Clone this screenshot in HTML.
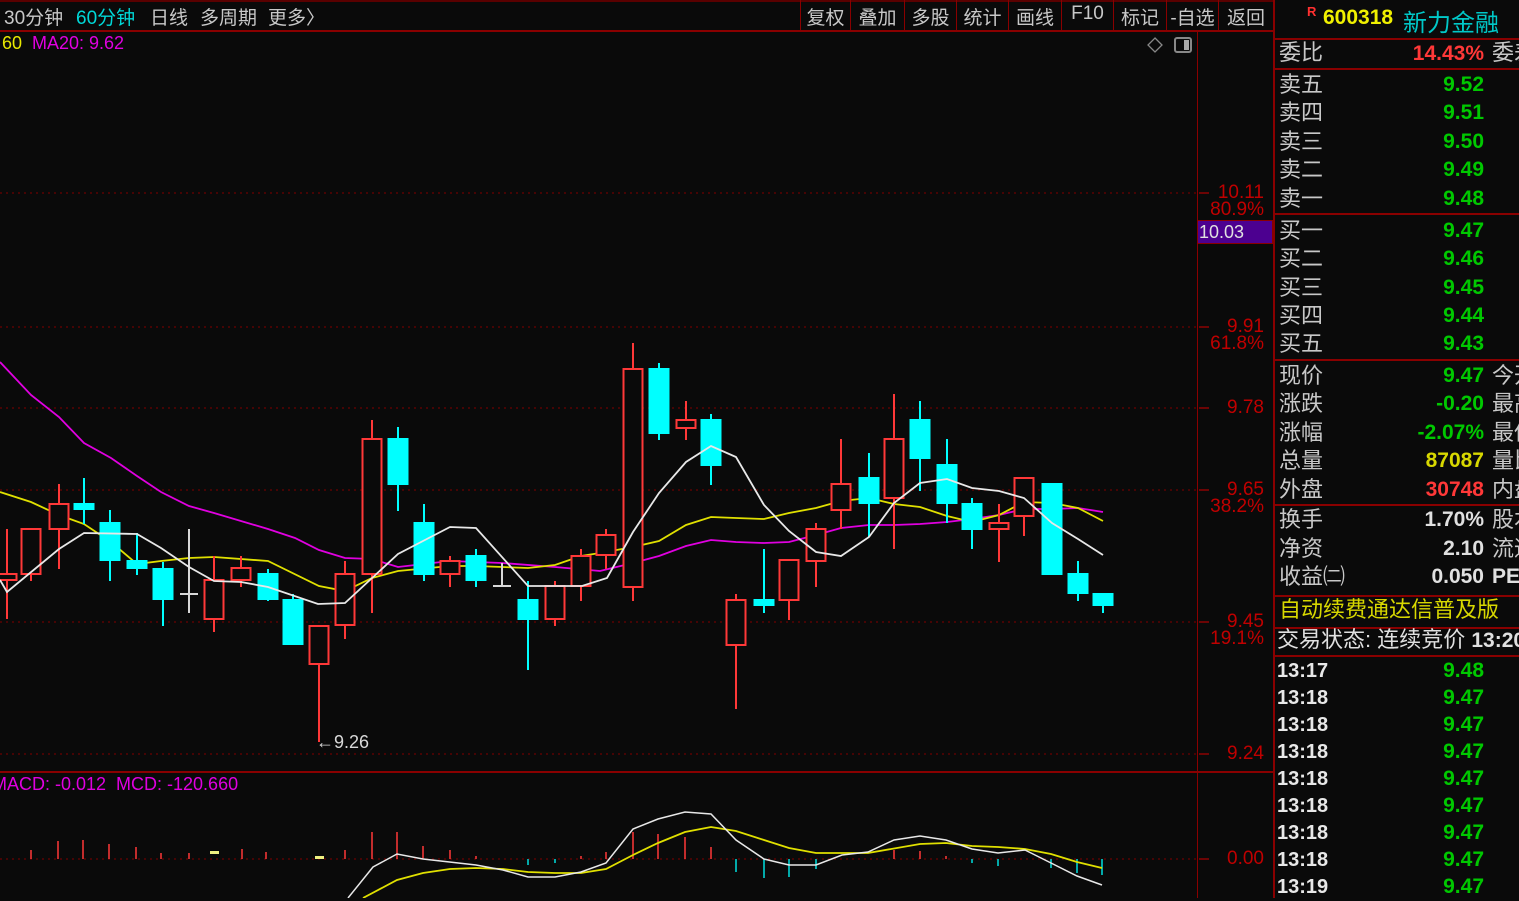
<!DOCTYPE html>
<html><head><meta charset="utf-8"><style>
*{margin:0;padding:0;box-sizing:border-box}
body{width:1519px;height:898px;background:#0a0a0a;overflow:hidden;position:relative;font-family:"Liberation Sans","Noto Sans CJK SC",sans-serif}
.a{position:absolute;white-space:nowrap}
.tb{color:#c8c8c8;font-size:19px;top:3px}
.btn{color:#c8c8c8;font-size:19px;top:3px;text-align:center}
.ax{color:#c00000;font-size:19px;right:255px;text-align:right}
.lb{left:1279px;color:#c8c8c8;font-size:22px;height:28px;line-height:28px}
.v{right:35px;text-align:right;font-weight:bold;font-size:21px;height:28px;line-height:28px;color:#00c800}
.c3{left:1492px;color:#c8c8c8;font-size:22px;height:28px;line-height:28px}
.tk{left:1277px;color:#e8e8e8;font-weight:bold;font-size:20px;height:27px;line-height:27px}
.hl{position:absolute;height:2px;background:#8a0000}
</style></head><body>
<div class="hl" style="left:0;top:0;width:1273px;height:2px;background:#5a0000"></div>
<div class="hl" style="left:0;top:30px;width:1273px"></div>
<div class="a tb" style="left:4px">30分钟</div>
<div class="a tb" style="left:76px;color:#00d8d8">60分钟</div>
<div class="a tb" style="left:150px">日线</div>
<div class="a tb" style="left:200px">多周期</div>
<div class="a tb" style="left:268px">更多〉</div>
<div class="a" style="left:800px;top:0;width:1px;height:30px;background:#8a0000"></div>
<div class="a" style="left:850px;top:0;width:1px;height:30px;background:#8a0000"></div>
<div class="a" style="left:904px;top:0;width:1px;height:30px;background:#8a0000"></div>
<div class="a" style="left:956px;top:0;width:1px;height:30px;background:#8a0000"></div>
<div class="a" style="left:1008px;top:0;width:1px;height:30px;background:#8a0000"></div>
<div class="a" style="left:1061px;top:0;width:1px;height:30px;background:#8a0000"></div>
<div class="a" style="left:1113px;top:0;width:1px;height:30px;background:#8a0000"></div>
<div class="a" style="left:1166px;top:0;width:1px;height:30px;background:#8a0000"></div>
<div class="a" style="left:1218px;top:0;width:1px;height:30px;background:#8a0000"></div>
<div class="a btn" style="left:801px;width:49px">复权</div>
<div class="a btn" style="left:851px;width:53px">叠加</div>
<div class="a btn" style="left:905px;width:51px">多股</div>
<div class="a btn" style="left:957px;width:51px">统计</div>
<div class="a btn" style="left:1009px;width:52px">画线</div>
<div class="a btn" style="left:1062px;width:51px">F10</div>
<div class="a btn" style="left:1114px;width:52px">标记</div>
<div class="a btn" style="left:1167px;width:51px">-自选</div>
<div class="a btn" style="left:1219px;width:54px">返回</div>

<div class="a" style="left:2px;top:33px;font-size:18px;color:#e8e800">60</div>
<div class="a" style="left:32px;top:33px;font-size:18px;color:#e000e0">MA20: 9.62</div>

<div class="a" style="left:1197px;top:30px;width:1px;height:868px;background:#8a0000"></div>
<div class="hl" style="left:0;top:771px;width:1273px"></div>
<div class="a" style="left:1273px;top:0;width:2px;height:898px;background:#8a0000"></div>

<svg class="a" style="left:0;top:0" width="1273" height="898">
<g stroke="#6a0000" stroke-width="1.3" stroke-dasharray="2,4">
<line x1="0" y1="193" x2="1197" y2="193"/><line x1="0" y1="327" x2="1197" y2="327"/>
<line x1="0" y1="408" x2="1197" y2="408"/><line x1="0" y1="490" x2="1197" y2="490"/>
<line x1="0" y1="622" x2="1197" y2="622"/><line x1="0" y1="754" x2="1197" y2="754"/>
<line x1="0" y1="859" x2="1197" y2="859"/>
</g>
<g stroke="#a00000" stroke-width="1.3">
<line x1="1199" y1="193" x2="1209" y2="193"/><line x1="1199" y1="327" x2="1209" y2="327"/>
<line x1="1199" y1="408" x2="1209" y2="408"/><line x1="1199" y1="490" x2="1209" y2="490"/>
<line x1="1199" y1="622" x2="1209" y2="622"/><line x1="1199" y1="754" x2="1209" y2="754"/>
<line x1="1199" y1="859" x2="1209" y2="859"/>
</g>
<path d="M1155 38 L1162 45 L1155 52 L1148 45 Z" fill="none" stroke="#888" stroke-width="1.3"/>
<rect x="1175" y="38" width="16" height="14" rx="2" fill="none" stroke="#888" stroke-width="2"/>
<rect x="1184" y="40" width="5" height="10" fill="#aaa"/>

<polyline fill="none" stroke="#e000e0" stroke-width="1.8" points="0,362 31,395 59,417 84,443 111,458 137,476 161,492 189,506 214,513 268,529 295,538 319,550 345,558 372,559 398,567 450,561 502,563 555,567 600,571 633,563 659,556 686,546 711,540 736,542 764,543 789,542 816,535 841,528 869,525 894,525 920,524 947,522 972,519 999,515 1024,509 1052,509 1078,508 1103,512"/>
<polyline fill="none" stroke="#e0e000" stroke-width="1.8" points="0,492 31,502 59,515 84,524 111,542 137,564 161,561 189,558 214,557 268,561 319,586 345,591 372,578 398,571 450,566 476,566 528,568 555,565 581,556 600,553 633,547 659,541 686,525 711,517 736,518 764,519 789,513 816,508 841,501 869,498 894,504 920,507 947,516 972,522 999,515 1024,502 1052,503 1078,508 1103,521"/>

<g stroke="#ff3838" stroke-width="2" fill="#0a0a0a">
<line x1="7" y1="529" x2="7" y2="619"/><rect x="-2.5" y="574" width="19" height="6"/>
<line x1="31" y1="529" x2="31" y2="581"/><rect x="21.5" y="529" width="19" height="45"/>
<line x1="59" y1="484" x2="59" y2="569"/><rect x="49.5" y="504" width="19" height="25"/>
<line x1="214" y1="556" x2="214" y2="632"/><rect x="204.5" y="580" width="19" height="39"/>
<line x1="241" y1="556" x2="241" y2="587"/><rect x="231.5" y="568" width="19" height="12"/>
<line x1="319" y1="626" x2="319" y2="742"/><rect x="309.5" y="626" width="19" height="38"/>
<line x1="345" y1="561" x2="345" y2="639"/><rect x="335.5" y="574" width="19" height="51"/>
<line x1="372" y1="420" x2="372" y2="613"/><rect x="362.5" y="439" width="19" height="135"/>
<line x1="450" y1="556" x2="450" y2="587"/><rect x="440.5" y="561" width="19" height="13"/>
<line x1="555" y1="581" x2="555" y2="626"/><rect x="545.5" y="586" width="19" height="33"/>
<line x1="581" y1="549" x2="581" y2="601"/><rect x="571.5" y="556" width="19" height="30"/>
<line x1="606" y1="529" x2="606" y2="569"/><rect x="596.5" y="535" width="19" height="20"/>
<line x1="633" y1="343" x2="633" y2="601"/><rect x="623.5" y="369" width="19" height="218"/>
<line x1="686" y1="401" x2="686" y2="440"/><rect x="676.5" y="420" width="19" height="8"/>
<line x1="736" y1="594" x2="736" y2="709"/><rect x="726.5" y="600" width="19" height="45"/>
<line x1="789" y1="560" x2="789" y2="620"/><rect x="779.5" y="560" width="19" height="40"/>
<line x1="816" y1="523" x2="816" y2="587"/><rect x="806.5" y="529" width="19" height="32"/>
<line x1="841" y1="439" x2="841" y2="529"/><rect x="831.5" y="484" width="19" height="26"/>
<line x1="894" y1="394" x2="894" y2="549"/><rect x="884.5" y="439" width="19" height="59"/>
<line x1="999" y1="504" x2="999" y2="562"/><rect x="989.5" y="523" width="19" height="6"/>
<line x1="1024" y1="478" x2="1024" y2="536"/><rect x="1014.5" y="478" width="19" height="38"/>
</g>
<g stroke="#00ffff" stroke-width="2" fill="#00ffff">
<line x1="84" y1="478" x2="84" y2="524"/><rect x="74.5" y="504" width="19" height="5"/>
<line x1="110" y1="510" x2="110" y2="581"/><rect x="100.5" y="523" width="19" height="37"/>
<line x1="137" y1="533" x2="137" y2="575"/><rect x="127.5" y="561" width="19" height="7"/>
<line x1="163" y1="562" x2="163" y2="626"/><rect x="153.5" y="569" width="19" height="30"/>
<line x1="268" y1="569" x2="268" y2="601"/><rect x="258.5" y="574" width="19" height="25"/>
<line x1="293" y1="594" x2="293" y2="645"/><rect x="283.5" y="600" width="19" height="44"/>
<line x1="398" y1="427" x2="398" y2="511"/><rect x="388.5" y="439" width="19" height="45"/>
<line x1="424" y1="504" x2="424" y2="581"/><rect x="414.5" y="523" width="19" height="51"/>
<line x1="476" y1="549" x2="476" y2="587"/><rect x="466.5" y="556" width="19" height="24"/>
<line x1="528" y1="581" x2="528" y2="670"/><rect x="518.5" y="600" width="19" height="19"/>
<line x1="659" y1="363" x2="659" y2="440"/><rect x="649.5" y="369" width="19" height="64"/>
<line x1="711" y1="414" x2="711" y2="485"/><rect x="701.5" y="420" width="19" height="45"/>
<line x1="764" y1="549" x2="764" y2="613"/><rect x="754.5" y="600" width="19" height="5"/>
<line x1="869" y1="453" x2="869" y2="537"/><rect x="859.5" y="478" width="19" height="25"/>
<line x1="920" y1="401" x2="920" y2="491"/><rect x="910.5" y="420" width="19" height="38"/>
<line x1="947" y1="439" x2="947" y2="523"/><rect x="937.5" y="465" width="19" height="38"/>
<line x1="972" y1="498" x2="972" y2="549"/><rect x="962.5" y="504" width="19" height="25"/>
<rect x="1042.5" y="484" width="19" height="90"/>
<line x1="1078" y1="561" x2="1078" y2="601"/><rect x="1068.5" y="574" width="19" height="19"/>
<line x1="1103" y1="594" x2="1103" y2="613"/><rect x="1093.5" y="594" width="19" height="11"/>
</g>
<g stroke="#d8d8d8" stroke-width="2">
<line x1="189" y1="529" x2="189" y2="613"/><line x1="180" y1="594" x2="198" y2="594"/>
<line x1="502" y1="563" x2="502" y2="586"/><line x1="493" y1="586" x2="511" y2="586"/>
</g>
<polyline fill="none" stroke="#e8e8e8" stroke-width="1.8" points="0,580 7,592 59,549 84,533 137,534 161,548 189,567 214,581 241,582 268,587 318,604 345,603 398,554 450,527 476,528 528,586 582,586 607,578 633,532 659,493 686,462 711,446 736,457 764,505 789,531 816,552 841,556 869,537 894,503 920,483 947,479 972,488 999,491 1024,498 1052,523 1078,539 1103,555"/>
<text x="316" y="748" fill="#d8d8d8" font-size="18" font-family="Liberation Sans">←9.26</text>

<g stroke="#ff3838" stroke-width="1.5">
<line x1="31" y1="850" x2="31" y2="859"/><line x1="58" y1="841" x2="58" y2="859"/><line x1="83" y1="840" x2="83" y2="859"/>
<line x1="109" y1="844" x2="109" y2="859"/><line x1="136" y1="847" x2="136" y2="859"/><line x1="161" y1="853" x2="161" y2="859"/>
<line x1="189" y1="853" x2="189" y2="859"/><line x1="242" y1="849" x2="242" y2="859"/><line x1="266" y1="852" x2="266" y2="859"/>
<line x1="345" y1="850" x2="345" y2="859"/><line x1="372" y1="832" x2="372" y2="859"/><line x1="397" y1="832" x2="397" y2="859"/>
<line x1="423" y1="846" x2="423" y2="859"/><line x1="450" y1="850" x2="450" y2="859"/><line x1="476" y1="856" x2="476" y2="859"/>
<line x1="581" y1="856" x2="581" y2="859"/><line x1="606" y1="852" x2="606" y2="859"/><line x1="633" y1="832" x2="633" y2="859"/>
<line x1="658" y1="834" x2="658" y2="859"/><line x1="685" y1="837" x2="685" y2="859"/><line x1="711" y1="847" x2="711" y2="859"/>
<line x1="894" y1="850" x2="894" y2="859"/><line x1="920" y1="851" x2="920" y2="859"/><line x1="946" y1="856" x2="946" y2="859"/>
</g>
<rect x="210" y="851" width="9" height="3" fill="#f0f080"/><rect x="315" y="856" width="9" height="3" fill="#f0f080"/>
<g stroke="#00e0e0" stroke-width="1.5">
<line x1="528" y1="859" x2="528" y2="865"/><line x1="555" y1="859" x2="555" y2="863"/><line x1="736" y1="859" x2="736" y2="872"/>
<line x1="764" y1="859" x2="764" y2="878"/><line x1="789" y1="859" x2="789" y2="877"/><line x1="816" y1="859" x2="816" y2="869"/>
<line x1="972" y1="859" x2="972" y2="863"/><line x1="998" y1="859" x2="998" y2="866"/><line x1="1051" y1="859" x2="1051" y2="868"/>
<line x1="1077" y1="859" x2="1077" y2="873"/><line x1="1102" y1="859" x2="1102" y2="875"/>
</g>
<polyline fill="none" stroke="#e0e000" stroke-width="1.8" points="363,898 397,880 423,873 450,869 476,868 503,869 528,872 555,873 581,873 606,869 633,855 658,843 685,832 711,827 736,831 764,840 789,848 816,853 868,853 920,844 946,843 972,846 998,847 1025,849 1051,854 1077,862 1102,868"/>
<polyline fill="none" stroke="#e8e8e8" stroke-width="1.5" points="348,898 373,867 397,854 423,859 476,865 503,870 528,877 555,877 581,872 606,863 633,829 658,819 685,812 711,814 736,840 764,859 789,865 816,865 842,855 868,852 894,840 920,836 946,840 972,849 998,853 1025,850 1051,863 1077,876 1102,885"/>
</svg>
<div class="a" style="left:-8px;top:774px;font-size:18px;color:#e000e0">MACD: -0.012&nbsp; MCD: -120.660</div>

<div class="a ax" style="top:182px">10.11</div>
<div class="a ax" style="top:199px">80.9%</div>
<div class="a" style="left:1197px;top:220px;width:76px;height:24px;background:#4c0090;border:1px solid #8a0000;color:#e0e0e0;font-size:18px;line-height:22px;padding-left:1px">10.03</div>
<div class="a ax" style="top:316px">9.91</div>
<div class="a ax" style="top:333px">61.8%</div>
<div class="a ax" style="top:397px">9.78</div>
<div class="a ax" style="top:479px">9.65</div>
<div class="a ax" style="top:496px">38.2%</div>
<div class="a ax" style="top:611px">9.45</div>
<div class="a ax" style="top:628px">19.1%</div>
<div class="a ax" style="top:743px">9.24</div>
<div class="a ax" style="top:848px">0.00</div>

<div class="a" style="left:1307px;top:4px;color:#ff3030;font-size:13px;font-weight:bold">R</div>
<div class="a" style="left:1323px;top:6px;color:#f0f000;font-size:21px;font-weight:bold">600318</div>
<div class="a" style="left:1403px;top:3px;color:#00c8c8;font-size:24px">新力金融</div>
<div class="hl" style="left:1275px;top:38px;width:244px"></div>
<div class="hl" style="left:1275px;top:68px;width:244px"></div>
<div class="hl" style="left:1275px;top:213px;width:244px"></div>
<div class="hl" style="left:1275px;top:359px;width:244px"></div>
<div class="hl" style="left:1275px;top:504px;width:244px"></div>
<div class="hl" style="left:1275px;top:595px;width:244px"></div>
<div class="hl" style="left:1275px;top:627px;width:244px"></div>
<div class="hl" style="left:1275px;top:655px;width:244px"></div>

<div class="a lb" style="top:39px">委比</div><div class="a v" style="top:40px;color:#ff3838">14.43%</div><div class="a c3" style="top:39px">委差</div>
<div class="a lb" style="top:71px">卖五</div><div class="a v" style="top:71px">9.52</div>
<div class="a lb" style="top:99px">卖四</div><div class="a v" style="top:99px">9.51</div>
<div class="a lb" style="top:128px">卖三</div><div class="a v" style="top:128px">9.50</div>
<div class="a lb" style="top:156px">卖二</div><div class="a v" style="top:156px">9.49</div>
<div class="a lb" style="top:185px">卖一</div><div class="a v" style="top:185px">9.48</div>
<div class="a lb" style="top:217px">买一</div><div class="a v" style="top:217px">9.47</div>
<div class="a lb" style="top:245px">买二</div><div class="a v" style="top:245px">9.46</div>
<div class="a lb" style="top:274px">买三</div><div class="a v" style="top:274px">9.45</div>
<div class="a lb" style="top:302px">买四</div><div class="a v" style="top:302px">9.44</div>
<div class="a lb" style="top:330px">买五</div><div class="a v" style="top:330px">9.43</div>
<div class="a lb" style="top:362px">现价</div><div class="a v" style="top:362px">9.47</div><div class="a c3" style="top:362px">今开</div>
<div class="a lb" style="top:390px">涨跌</div><div class="a v" style="top:390px">-0.20</div><div class="a c3" style="top:390px">最高</div>
<div class="a lb" style="top:419px">涨幅</div><div class="a v" style="top:419px">-2.07%</div><div class="a c3" style="top:419px">最低</div>
<div class="a lb" style="top:447px">总量</div><div class="a v" style="top:447px;color:#d8d800">87087</div><div class="a c3" style="top:447px">量比</div>
<div class="a lb" style="top:476px">外盘</div><div class="a v" style="top:476px;color:#ff3838">30748</div><div class="a c3" style="top:476px">内盘</div>
<div class="a lb" style="top:506px">换手</div><div class="a v" style="top:506px;color:#e0e0e0">1.70%</div><div class="a c3" style="top:506px">股本</div>
<div class="a lb" style="top:535px">净资</div><div class="a v" style="top:535px;color:#e0e0e0">2.10</div><div class="a c3" style="top:535px">流通</div>
<div class="a lb" style="top:563px">收益㈡</div><div class="a v" style="top:563px;color:#e0e0e0">0.050</div><div class="a c3" style="top:563px;font-weight:bold;font-size:21px;color:#e0e0e0">PE(动)</div>
<div class="a lb" style="top:596px;color:#d8d800">自动续费通达信普及版</div>
<div class="a lb" style="top:626px;left:1277px;color:#e0e0e0">交易状态: 连续竞价 <b style="font-size:21px">13:20</b></div>

<div class="a tk" style="top:658px">13:17</div><div class="a v" style="top:657px">9.48</div>
<div class="a tk" style="top:685px">13:18</div><div class="a v" style="top:684px">9.47</div>
<div class="a tk" style="top:712px">13:18</div><div class="a v" style="top:711px">9.47</div>
<div class="a tk" style="top:739px">13:18</div><div class="a v" style="top:738px">9.47</div>
<div class="a tk" style="top:766px">13:18</div><div class="a v" style="top:765px">9.47</div>
<div class="a tk" style="top:793px">13:18</div><div class="a v" style="top:792px">9.47</div>
<div class="a tk" style="top:820px">13:18</div><div class="a v" style="top:819px">9.47</div>
<div class="a tk" style="top:847px">13:18</div><div class="a v" style="top:846px">9.47</div>
<div class="a tk" style="top:874px">13:19</div><div class="a v" style="top:873px">9.47</div>
</body></html>
